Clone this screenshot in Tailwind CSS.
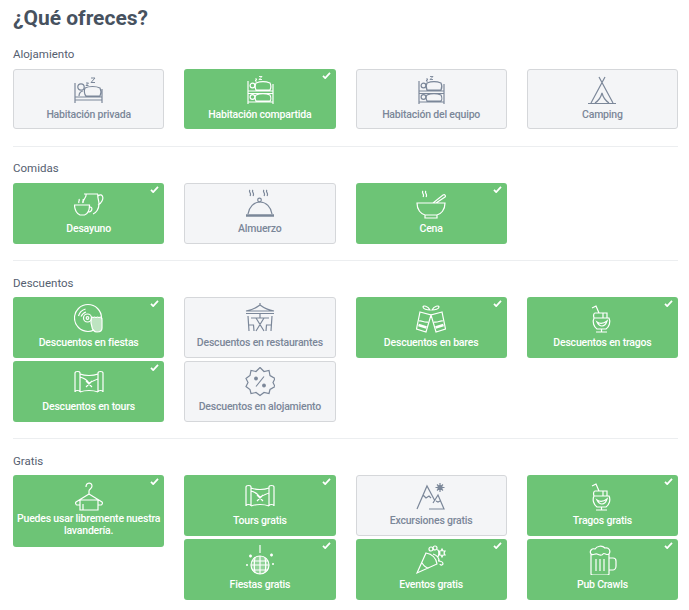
<!DOCTYPE html>
<html lang="es">
<head>
  <meta charset="utf-8" />
  <title>¿Qué ofreces?</title>
  <script src="https://cdn.jsdelivr.net/npm/@tailwindcss/browser@4"></script>
</head>
<body class="bg-white font-['Roboto',sans-serif] text-[#4a5568] overflow-hidden">
  <!-- Icon set -->
  <svg class="hidden">
    <symbol id="bed" viewBox="0 0 30 30"><path d="M1 8v20M28 14v14M1 22h27M1 25h27M5 21c0-3 2-5 4-5M11 13c4-2 11-2 15 0 1 2 1 6 0 8H12c-2-2-2-6-1-8z"/><path d="M12 8h2.500l-2.500 2.500h2.500M17 3h4l-4 4.500h4" stroke-width="1"/><circle cx="7" cy="12" r="3.2"/></symbol>
    <symbol id="bunk" viewBox="0 0 30 30"><path d="M3 6v23M28 9v20M3 16h25M3 18.500h25M3 27h25M11 8c4-1.500 10-1.500 14 0 1 2 1 5 0 7H11c-1-2-1-5 0-7zM11 20c4-1.500 10-1.500 14 0 1 2 1 5 0 6H11c-1-2-1-5 0-6z"/><path d="M10 4h2l-2 2h2M14 1.500h3l-3 3h3" stroke-width=".9"/><circle cx="7.500" cy="10.500" r="2.400"/><circle cx="7.500" cy="22" r="2.400"/></symbol>
    <symbol id="tent" viewBox="0 0 30 30"><path d="M12 2l14 26M18 2L4 28M1 28.500h28M8 28c3-2 6-6 7-10 1 4 4 8 7 10"/></symbol>
    <symbol id="cup" viewBox="0 0 30 30"><path d="M10 5h14M12 5c1 3-3 5-3 9M24 5c-1 3 1 6 1 10 0 5-3 9-6 10M24 7c4-3 6 1 4 5-1 2-2 3-4 4M.500 16h15c0 5-2 9-5 10H6c-3-1-5.500-5-5.500-10zM15 18c4-1 4 5-1 5M5 14c-1-2 1-2 0-4M9 14c-1-2 1-2 0-4"/></symbol>
    <symbol id="cloche" viewBox="0 0 30 30"><path d="M5 1c-2 2 2 3 0 6M8 1c-2 2 2 3 0 6M19 1c-2 2 2 3 0 6M22 1c-2 2 2 3 0 6M3 25c1-7 6-12 12-12s11 5 12 12"/><circle cx="14.500" cy="11" r="1.800"/><path d="M1 26.500h28" stroke-width="2.500"/></symbol>
    <symbol id="bowl" viewBox="0 0 30 30"><path d="M1 14h28c0 7-4 11-8 12H9C5 25 1 21 1 14zM9 26v3h12v-3M17 14l10-8c2-1 3 1 2 2l-9 6M7 2c-2 2 2 3 0 6M10 2c-2 2 2 3 0 6"/></symbol>
    <symbol id="disc" viewBox="0 0 30 30"><path d="M20 27c-2 1-4 1.500-6 1.500A13.500 13.500 0 1 1 27.500 15v1"/><circle cx="13.500" cy="15" r="4"/><circle cx="13.500" cy="15" r="1.300"/><path d="M4.500 13c1-4 4-6 7-7M7 13.500c1-2 3-4 5-4.500"/><path d="M17 20c0-2 0-6 1-6 1 0 1 1 1 1s0-1 1.500-1 1.500 1 1.500 1 0-1 1.500-1 1.500 1 1.500 1 0-1 1.500-1 1.500 2 1.500 3v8c0 3-2 4-5 4s-5-3-5-5z" fill="currentColor" fill-opacity=".55"/></symbol>
    <symbol id="terrace" viewBox="0 0 30 30"><path d="M15 0v2M1 8c6-1 10-3 14-6 4 3 8 5 14 6zM1 10.500h28M15 10v5M6 15h18M11 15l8 13M19 15l-8 13M3 13l1 15M3.500 22h5l.500 6M27 13l-1 15M26.500 22h-5l-.500 6"/></symbol>
    <symbol id="percent" viewBox="0 0 30 30"><path d="M15 1l4 4 5-1 1 5 5 3-2 4 2 4-5 3-1 4-5-1-4 3-4-3-5 1-1-4-4-3 2-4-2-4 4-3 1-5 5 1zM19 10l-8 10" transform="translate(0 -.500)"/><circle cx="11" cy="11.500" r="1.300" fill="currentColor"/><circle cx="19" cy="18.500" r="1.300" fill="currentColor"/></symbol>
    <symbol id="cheers" viewBox="0 0 30 30"><path d="M4 9l11 3-5 17-9.500-3zM26 9l-11 3 5 17 9.500-3zM3 18c3-1 5 2 9 1M27 18c-3-1-5 2-9 1M14 7c-2-4-7-5-7-3s4 3 7 3zm2 0c2-4 7-5 7-3s-4 3-7 3z"/><path d="M2.500 22l8 2.500M27.500 22l-8 2.500" stroke-width="2.500"/></symbol>
    <symbol id="cocktail" viewBox="0 0 30 30"><path d="M7 15h15c2 4 0 9-3 11h-9c-3-2-5-7-3-11zM14.500 26v3M9 29h11M7 15c-1-3 0-5 1-5h12v5M12 10L9 3l-4 2M10 19c3 2 6 2 10-1-1 3-3 5-5 5s-4-2-5-4zM16 10v5"/></symbol>
    <symbol id="map" viewBox="0 0 30 30"><path d="M1 6c0-2 5-2 5 0v19c0-2-5-2-5 0zM24 6c0-2 5-2 5 0v19c0-2-5-2-5 0zM6 7c5 2 13 2 18 0M6 25c5-2 13-2 18 0M6 10c4 1 7 3 9 6 2-1 6-3 9-4M12 20l6-6M12 14l6 6"/></symbol>
    <symbol id="hanger" viewBox="0 0 30 30"><path d="M12 6c0-5 6-5 6-1 0 3-3 3-3 5v3M15 13L2 21c-1 1 0 3 1 3h3M15 13l13 8c1 1 0 3-1 3h-3M6 19h18v10H6zM9 29v-6"/></symbol>
    <symbol id="disco" viewBox="0 0 30 30"><path d="M15 0v8M6 20a9 9 0 1 0 18 0 9 9 0 1 0-18 0z" fill="currentColor" fill-opacity=".25"/><path d="M7 16h16M6 20h18M7 25h16M15 11v18M10 12.500c-1 5-1 10 0 15M20 12.500c1 5 1 10 0 15"/><path d="M4 11h3M5.500 9.500v3M25 10h3M26.500 8.500v3M1 20h2M27 19h2" stroke-width="1.500"/></symbol>
    <symbol id="mountain" viewBox="0 0 30 30"><path d="M1 28L11 5l8 15M13 28h15l-6-14-5 8M7 14l3 3 3-2 2 2M20 20l2 1 2-1M24 2v9M19.500 6.500h9M21 3.500l6 6M27 3.500l-6 6"/><circle cx="24" cy="6.500" r="2" fill="currentColor"/></symbol>
    <symbol id="popper" viewBox="0 0 30 30"><path d="M10 8L1 28l20-9c-1-6-5-10-11-11zM6 18c2 3 4 5 7 5"/><circle cx="15" cy="4" r="2"/><circle cx="19" cy="3" r="2"/><path d="M21 5c1-1 3 2 1 7M17 9c3 1 6 3 6 7M26 4l1 2 2 0-1 2 1 2-2 0-1 2-1-2-2 0 1-2-1-2 2 0zM22 16c3 0 5 1 5 3-1 2-3 1-3 0"/></symbol>
    <symbol id="beer" viewBox="0 0 30 30"><path d="M4 9c-2-3 1-6 4-5 2-3 7-4 10-1 4-1 6 3 4 6M4 9c2 2 4-1 6 0s5 2 6 0 4 2 6 0v20c0 1-1 1-2 1H6c-1 0-2 0-2-1zM9 14v12M13 14v12M17 14v12M22 13h4c2 0 3 1 3 3v5c0 3-2 4-3 4h-4"/></symbol>
    <symbol id="check" viewBox="0 0 10 8"><path d="M1 4.500l2.500 2.500L9 1"/></symbol>
  </svg>

  <main class="pl-[13px] pr-[11px]">
    <h1 class="text-[21px] leading-[36px] font-bold text-[#47525f]">¿Qué ofreces?</h1>

    <!-- Alojamiento -->
    <section class="pb-[17px] border-b border-[#eceef0]">
      <h2 class="text-[11.500px] leading-[17px] mt-[10px] mb-[6px] text-[#556070]">Alojamiento</h2>
      <div class="grid grid-cols-4 gap-x-5 gap-y-[3px]">
        <div class="relative h-[60px] flex flex-col items-center rounded-[3px] border border-[#d5d7da] bg-[#f4f5f7] text-[#7b8799] pt-[5px] text-[10.500px] tracking-[-0.2px] font-medium">
          <svg class="w-[30px] h-[30px] fill-none stroke-current stroke-[1.2]"><use href="#bed"/></svg>
          <span class="leading-[17px] mt-[1px]">Habitación privada</span>
        </div>
        <div class="relative h-[60px] flex flex-col items-center rounded-[3px] bg-[#6dc476] text-white pt-[6px] text-[10.500px] tracking-[-0.2px] font-medium">
          <svg class="w-[30px] h-[30px] fill-none stroke-current stroke-[1.2]"><use href="#bunk"/></svg>
          <span class="leading-[17px] mt-[1px]">Habitación compartida</span>
          <svg class="absolute top-[3px] right-[5px] w-[9px] h-[7px] fill-none stroke-current stroke-2"><use href="#check"/></svg>
        </div>
        <div class="relative h-[60px] flex flex-col items-center rounded-[3px] border border-[#d5d7da] bg-[#f4f5f7] text-[#7b8799] pt-[5px] text-[10.500px] tracking-[-0.2px] font-medium">
          <svg class="w-[30px] h-[30px] fill-none stroke-current stroke-[1.2]"><use href="#bunk"/></svg>
          <span class="leading-[17px] mt-[1px]">Habitación del equipo</span>
        </div>
        <div class="relative h-[60px] flex flex-col items-center rounded-[3px] border border-[#d5d7da] bg-[#f4f5f7] text-[#7b8799] pt-[5px] text-[10.500px] tracking-[-0.2px] font-medium">
          <svg class="w-[30px] h-[30px] fill-none stroke-current stroke-[1.2]"><use href="#tent"/></svg>
          <span class="leading-[17px] mt-[1px]">Camping</span>
        </div>
      </div>
    </section>

    <!-- Comidas -->
    <section class="pb-[16px] border-b border-[#eceef0]">
      <h2 class="text-[11.500px] leading-[17px] mt-[13px] mb-[6px] text-[#556070]">Comidas</h2>
      <div class="grid grid-cols-4 gap-x-5 gap-y-[3px]">
        <div class="relative h-[61px] flex flex-col items-center rounded-[3px] bg-[#6dc476] text-white pt-[6px] text-[10.500px] tracking-[-0.2px] font-medium">
          <svg class="w-[30px] h-[30px] fill-none stroke-current stroke-[1.2]"><use href="#cup"/></svg>
          <span class="leading-[17px] mt-[1px]">Desayuno</span>
          <svg class="absolute top-[3px] right-[5px] w-[9px] h-[7px] fill-none stroke-current stroke-2"><use href="#check"/></svg>
        </div>
        <div class="relative h-[61px] flex flex-col items-center rounded-[3px] border border-[#d5d7da] bg-[#f4f5f7] text-[#7b8799] pt-[5px] text-[10.500px] tracking-[-0.2px] font-medium">
          <svg class="w-[30px] h-[30px] fill-none stroke-current stroke-[1.2]"><use href="#cloche"/></svg>
          <span class="leading-[17px] mt-[1px]">Almuerzo</span>
        </div>
        <div class="relative h-[61px] flex flex-col items-center rounded-[3px] bg-[#6dc476] text-white pt-[6px] text-[10.500px] tracking-[-0.2px] font-medium">
          <svg class="w-[30px] h-[30px] fill-none stroke-current stroke-[1.2]"><use href="#bowl"/></svg>
          <span class="leading-[17px] mt-[1px]">Cena</span>
          <svg class="absolute top-[3px] right-[5px] w-[9px] h-[7px] fill-none stroke-current stroke-2"><use href="#check"/></svg>
        </div>
      </div>
    </section>

    <!-- Descuentos -->
    <section class="pb-[16px] border-b border-[#eceef0]">
      <h2 class="text-[11.500px] leading-[17px] mt-[14px] mb-[5px] text-[#556070]">Descuentos</h2>
      <div class="grid grid-cols-4 gap-x-5 gap-y-[3px]">
        <div class="relative h-[61px] flex flex-col items-center rounded-[3px] bg-[#6dc476] text-white pt-[6px] text-[10.500px] tracking-[-0.2px] font-medium">
          <svg class="w-[30px] h-[30px] fill-none stroke-current stroke-[1.2]"><use href="#disc"/></svg>
          <span class="leading-[17px] mt-[1px]">Descuentos en fiestas</span>
          <svg class="absolute top-[3px] right-[5px] w-[9px] h-[7px] fill-none stroke-current stroke-2"><use href="#check"/></svg>
        </div>
        <div class="relative h-[61px] flex flex-col items-center rounded-[3px] border border-[#d5d7da] bg-[#f4f5f7] text-[#7b8799] pt-[5px] text-[10.500px] tracking-[-0.2px] font-medium">
          <svg class="w-[30px] h-[30px] fill-none stroke-current stroke-[1.2]"><use href="#terrace"/></svg>
          <span class="leading-[17px] mt-[1px]">Descuentos en restaurantes</span>
        </div>
        <div class="relative h-[61px] flex flex-col items-center rounded-[3px] bg-[#6dc476] text-white pt-[6px] text-[10.500px] tracking-[-0.2px] font-medium">
          <svg class="w-[30px] h-[30px] fill-none stroke-current stroke-[1.2]"><use href="#cheers"/></svg>
          <span class="leading-[17px] mt-[1px]">Descuentos en bares</span>
          <svg class="absolute top-[3px] right-[5px] w-[9px] h-[7px] fill-none stroke-current stroke-2"><use href="#check"/></svg>
        </div>
        <div class="relative h-[61px] flex flex-col items-center rounded-[3px] bg-[#6dc476] text-white pt-[6px] text-[10.500px] tracking-[-0.2px] font-medium">
          <svg class="w-[30px] h-[30px] fill-none stroke-current stroke-[1.2]"><use href="#cocktail"/></svg>
          <span class="leading-[17px] mt-[1px]">Descuentos en tragos</span>
          <svg class="absolute top-[3px] right-[5px] w-[9px] h-[7px] fill-none stroke-current stroke-2"><use href="#check"/></svg>
        </div>
        <div class="relative h-[61px] flex flex-col items-center rounded-[3px] bg-[#6dc476] text-white pt-[6px] text-[10.500px] tracking-[-0.2px] font-medium">
          <svg class="w-[30px] h-[30px] fill-none stroke-current stroke-[1.2]"><use href="#map"/></svg>
          <span class="leading-[17px] mt-[1px]">Descuentos en tours</span>
          <svg class="absolute top-[3px] right-[5px] w-[9px] h-[7px] fill-none stroke-current stroke-2"><use href="#check"/></svg>
        </div>
        <div class="relative h-[61px] flex flex-col items-center rounded-[3px] border border-[#d5d7da] bg-[#f4f5f7] text-[#7b8799] pt-[5px] text-[10.500px] tracking-[-0.2px] font-medium">
          <svg class="w-[30px] h-[30px] fill-none stroke-current stroke-[1.2]"><use href="#percent"/></svg>
          <span class="leading-[17px] mt-[1px]">Descuentos en alojamiento</span>
        </div>
      </div>
    </section>

    <!-- Gratis -->
    <section>
      <h2 class="text-[11.500px] leading-[17px] mt-[14px] mb-[5px] text-[#556070]">Gratis</h2>
      <div class="grid grid-cols-4 gap-x-5 gap-y-[3px]">
        <div class="relative row-span-2 self-start h-[72px] flex flex-col items-center rounded-[3px] bg-[#6dc476] text-white pt-[6px] text-[10.500px] tracking-[-0.2px] font-medium text-center">
          <svg class="w-[30px] h-[30px] fill-none stroke-current stroke-[1.2]"><use href="#hanger"/></svg>
          <span class="leading-[12px] mt-[2px]">Puedes usar libremente nuestra lavandería.</span>
          <svg class="absolute top-[3px] right-[5px] w-[9px] h-[7px] fill-none stroke-current stroke-2"><use href="#check"/></svg>
        </div>
        <div class="relative h-[61px] flex flex-col items-center rounded-[3px] bg-[#6dc476] text-white pt-[6px] text-[10.500px] tracking-[-0.2px] font-medium">
          <svg class="w-[30px] h-[30px] fill-none stroke-current stroke-[1.2]"><use href="#map"/></svg>
          <span class="leading-[17px] mt-[1px]">Tours gratis</span>
          <svg class="absolute top-[3px] right-[5px] w-[9px] h-[7px] fill-none stroke-current stroke-2"><use href="#check"/></svg>
        </div>
        <div class="relative h-[61px] flex flex-col items-center rounded-[3px] border border-[#d5d7da] bg-[#f4f5f7] text-[#7b8799] pt-[5px] text-[10.500px] tracking-[-0.2px] font-medium">
          <svg class="w-[30px] h-[30px] fill-none stroke-current stroke-[1.2]"><use href="#mountain"/></svg>
          <span class="leading-[17px] mt-[1px]">Excursiones gratis</span>
        </div>
        <div class="relative h-[61px] flex flex-col items-center rounded-[3px] bg-[#6dc476] text-white pt-[6px] text-[10.500px] tracking-[-0.2px] font-medium">
          <svg class="w-[30px] h-[30px] fill-none stroke-current stroke-[1.2]"><use href="#cocktail"/></svg>
          <span class="leading-[17px] mt-[1px]">Tragos gratis</span>
          <svg class="absolute top-[3px] right-[5px] w-[9px] h-[7px] fill-none stroke-current stroke-2"><use href="#check"/></svg>
        </div>
        <div class="relative h-[61px] flex flex-col items-center rounded-[3px] bg-[#6dc476] text-white pt-[6px] text-[10.500px] tracking-[-0.2px] font-medium">
          <svg class="w-[30px] h-[30px] fill-none stroke-current stroke-[1.2]"><use href="#disco"/></svg>
          <span class="leading-[17px] mt-[1px]">Fiestas gratis</span>
          <svg class="absolute top-[3px] right-[5px] w-[9px] h-[7px] fill-none stroke-current stroke-2"><use href="#check"/></svg>
        </div>
        <div class="relative h-[61px] flex flex-col items-center rounded-[3px] bg-[#6dc476] text-white pt-[6px] text-[10.500px] tracking-[-0.2px] font-medium">
          <svg class="w-[30px] h-[30px] fill-none stroke-current stroke-[1.2]"><use href="#popper"/></svg>
          <span class="leading-[17px] mt-[1px]">Eventos gratis</span>
          <svg class="absolute top-[3px] right-[5px] w-[9px] h-[7px] fill-none stroke-current stroke-2"><use href="#check"/></svg>
        </div>
        <div class="relative h-[61px] flex flex-col items-center rounded-[3px] bg-[#6dc476] text-white pt-[6px] text-[10.500px] tracking-[-0.2px] font-medium">
          <svg class="w-[30px] h-[30px] fill-none stroke-current stroke-[1.2]"><use href="#beer"/></svg>
          <span class="leading-[17px] mt-[1px]">Pub Crawls</span>
          <svg class="absolute top-[3px] right-[5px] w-[9px] h-[7px] fill-none stroke-current stroke-2"><use href="#check"/></svg>
        </div>
      </div>
    </section>
  </main>
</body>
</html>
